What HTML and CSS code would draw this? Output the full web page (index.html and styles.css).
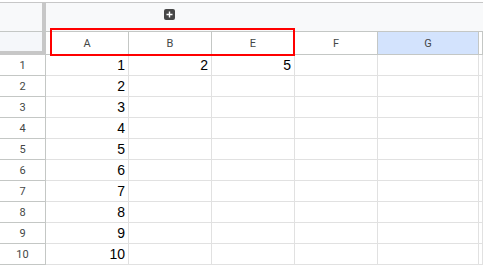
FILE: index.html
```html
<!DOCTYPE html>
<html lang="en">
  <head>
    <meta charset="UTF-8" />
    <title>Sheet</title>
    <link rel="stylesheet" href="styles.css">
  </head>
  <body>
    <div class="sheet">
      <div class="group-bar">
        <div class="group-corner"></div>
        <div class="group-area">
          <button class="group-toggle" title="Expand group">
            <svg width="11" height="11" viewBox="0 0 11 11">
              <rect width="11" height="11" rx="2" fill="#474747" />
              <path d="M5.5 2.5v6M2.5 5.5h6" stroke="#fff" stroke-width="1.4" />
            </svg>
          </button>
        </div>
      </div>

      <div class="grid">
        <div class="corner"></div>
        <div class="col-head">A</div>
        <div class="col-head">B</div>
        <div class="col-head">E</div>
        <div class="col-head">F</div>
        <div class="col-head selected">G</div>
        <div class="col-head"></div>

        <div class="row-head">1</div><div class="cell">1</div><div class="cell">2</div><div class="cell">5</div><div class="cell"></div><div class="cell"></div><div class="cell"></div>
        <div class="row-head">2</div><div class="cell">2</div><div class="cell"></div><div class="cell"></div><div class="cell"></div><div class="cell"></div><div class="cell"></div>
        <div class="row-head">3</div><div class="cell">3</div><div class="cell"></div><div class="cell"></div><div class="cell"></div><div class="cell"></div><div class="cell"></div>
        <div class="row-head">4</div><div class="cell">4</div><div class="cell"></div><div class="cell"></div><div class="cell"></div><div class="cell"></div><div class="cell"></div>
        <div class="row-head">5</div><div class="cell">5</div><div class="cell"></div><div class="cell"></div><div class="cell"></div><div class="cell"></div><div class="cell"></div>
        <div class="row-head">6</div><div class="cell">6</div><div class="cell"></div><div class="cell"></div><div class="cell"></div><div class="cell"></div><div class="cell"></div>
        <div class="row-head">7</div><div class="cell">7</div><div class="cell"></div><div class="cell"></div><div class="cell"></div><div class="cell"></div><div class="cell"></div>
        <div class="row-head">8</div><div class="cell">8</div><div class="cell"></div><div class="cell"></div><div class="cell"></div><div class="cell"></div><div class="cell"></div>
        <div class="row-head">9</div><div class="cell">9</div><div class="cell"></div><div class="cell"></div><div class="cell"></div><div class="cell"></div><div class="cell"></div>
        <div class="row-head">10</div><div class="cell">10</div><div class="cell"></div><div class="cell"></div><div class="cell"></div><div class="cell"></div><div class="cell"></div>
      </div>

      <div class="highlight"></div>
    </div>
  </body>
</html>
```

FILE: styles.css
```css
body {
  margin: 0;
  background: #fff;
  font-family: "Liberation Sans", Arial, sans-serif;
  overflow: hidden;
}

.sheet {
  position: relative;
  width: 483px;
  height: 268px;
  padding-top: 2px;
  box-sizing: border-box;
  overflow: hidden;
}

.group-bar {
  display: flex;
  height: 30px;
  box-sizing: border-box;
  border-top: 1px solid #c7c7c7;
  border-bottom: 1px solid #c4c7c5;
  background: #f8f9fa;
}

.group-corner {
  width: 46px;
  box-sizing: border-box;
  border-right: 4px solid #c7c7c7;
}

.group-area {
  flex: 1;
  padding: 6px 0 0 118px;
}

.group-toggle {
  display: block;
  padding: 0;
  border: none;
  background: none;
  width: 11px;
  height: 11px;
  cursor: pointer;
}

.group-toggle svg {
  display: block;
}

.grid {
  display: grid;
  grid-template-columns: 46px 83px 83px 83px 83px 101px 1fr;
  grid-template-rows: 23px;
  grid-auto-rows: 21px;
}

.grid > div {
  box-sizing: border-box;
}

.corner {
  background: #f5f7fa;
  border-right: 4px solid #c7c7c7;
  border-bottom: 4px solid #c7c7c7;
}

.col-head,
.row-head {
  display: flex;
  align-items: center;
  justify-content: center;
  font-family: Roboto, "Liberation Sans", sans-serif;
  font-size: 11px;
  color: #444746;
  background: #fff;
  border-right: 1px solid #c4c7c5;
  border-bottom: 1px solid #c4c7c5;
}

.col-head.selected {
  background: #d3e3fd;
}

.cell {
  display: flex;
  align-items: flex-end;
  justify-content: flex-end;
  padding: 0 3px 2px 0;
  font-size: 14px;
  color: #000;
  border-right: 1px solid #e1e1e1;
  border-bottom: 1px solid #e1e1e1;
}

.highlight {
  position: absolute;
  left: 50px;
  top: 28px;
  width: 245px;
  height: 28px;
  box-sizing: border-box;
  border: 2px solid #f00;
  pointer-events: none;
}
```
